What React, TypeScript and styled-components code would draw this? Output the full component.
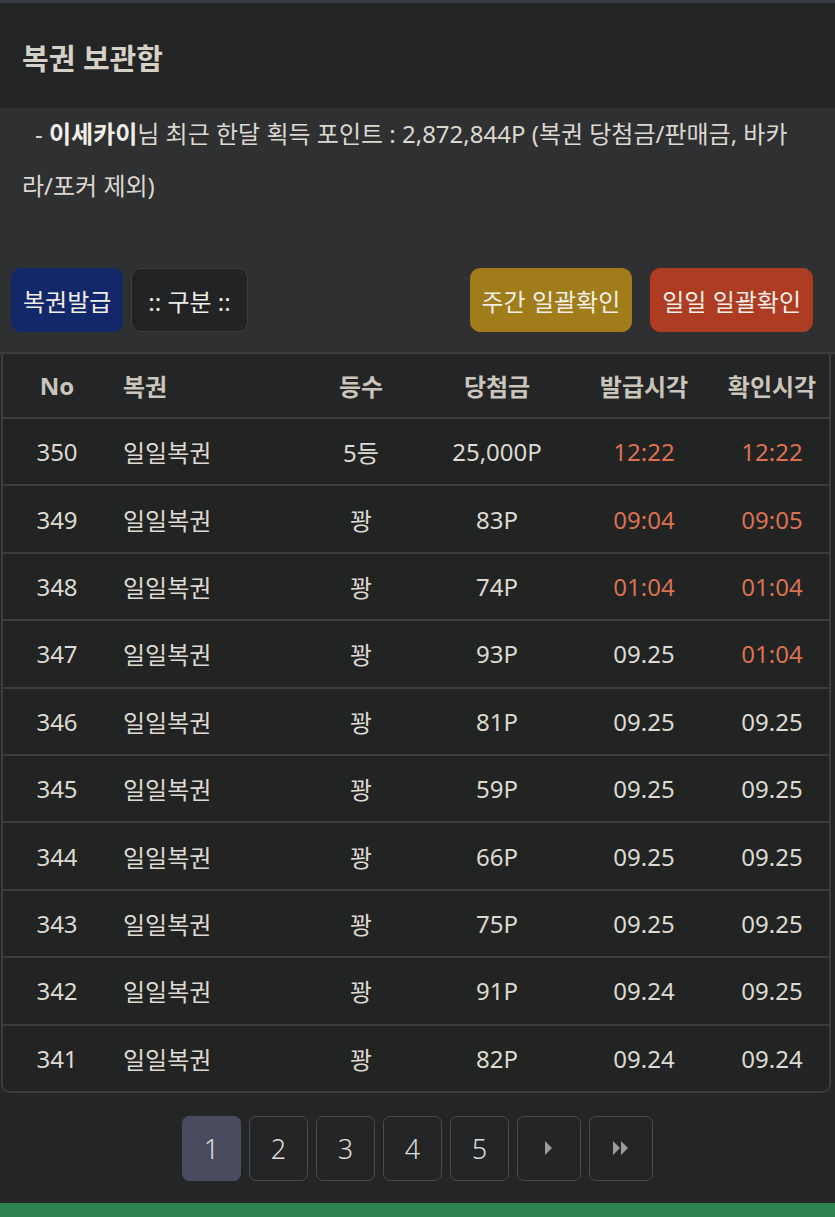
import React from "react";
import styled, { createGlobalStyle } from "styled-components";

const FONT = `"Noto Sans", "Noto Sans CJK KR", sans-serif`;

const GlobalStyle = createGlobalStyle`
  html, body {
    margin: 0;
    padding: 0;
    background: #242526;
  }
  body {
    font-family: ${FONT};
    color: #dedad2;
  }
  * { box-sizing: border-box; }
`;

const Page = styled.div`
  width: 835px;
  min-height: 1217px;
  display: flex;
  flex-direction: column;
  background: #242526;
  border-top: 3px solid #3a3c48;
`;

const TitleBar = styled.header`
  height: 105px;
  display: flex;
  align-items: center;
  padding: 0 22px;
  background: #232425;
`;

const Title = styled.h1`
  margin: 0;
  padding-top: 2px;
  font-size: 29px;
  font-weight: 700;
  color: #d6d1c6;
`;

const InfoSection = styled.section`
  background: #2f3031;
  padding: 0 22px 20px 11px;
  border-bottom: 2px solid #3c3d3e;
`;

const InfoText = styled.p`
  margin: 0;
  padding-left: 11px;
  font-size: 24px;
  line-height: 52px;
  color: #dcd8d0;
  text-indent: 13px;
  word-break: break-all;
`;

const Strong = styled.b`
  font-weight: 700;
  color: #f2efe9;
`;

const ButtonRow = styled.div`
  display: flex;
  align-items: center;
  margin-top: 56px;
  gap: 8px;
`;

const Spacer = styled.div`
  flex: 1;
`;

const ActionButton = styled.button<{ $bg: string; $border?: string; $ml?: number; $pad?: number }>`
  height: 64px;
  padding: 0 ${(p) => p.$pad ?? 11}px;
  border-radius: 10px;
  border: 1.5px solid ${(p) => p.$border ?? p.$bg};
  background: ${(p) => p.$bg};
  color: #f1eee8;
  font-family: ${FONT};
  font-size: 24px;
  font-weight: 400;
  margin-left: ${(p) => p.$ml ?? 0}px;
  white-space: nowrap;
`;

const Table = styled.div`
  margin: 0 4px 0 1px;
  background: #222323;
  border: 2px solid #3c3d3e;
  border-top: none;
  border-radius: 0 0 9px 9px;
  overflow: hidden;
`;

const Row = styled.div<{ $head?: boolean }>`
  display: grid;
  grid-template-columns: 108px 190px 120px 152px 142px 1fr;
  align-items: center;
  height: ${(p) => (p.$head ? "63px" : "67.4px")};
  border-top: ${(p) => (p.$head ? "none" : "2px solid #3c3d3e")};
  background: ${(p) => (p.$head ? "#242526" : "#222323")};
  font-size: 24px;
  font-weight: ${(p) => (p.$head ? 700 : 400)};
  color: ${(p) => (p.$head ? "#cbc6bb" : "#dedad2")};
`;

const Cell = styled.div<{ $left?: boolean; $hot?: boolean }>`
  text-align: ${(p) => (p.$left ? "left" : "center")};
  padding-left: ${(p) => (p.$left ? "12px" : "0")};
  color: ${(p) => (p.$hot ? "#da7150" : "inherit")};
  white-space: nowrap;
`;

const Pager = styled.nav`
  display: flex;
  justify-content: center;
  gap: 8px;
  margin-top: 23px;
`;

const PageBtn = styled.button<{ $active?: boolean; $wide?: boolean }>`
  width: ${(p) => (p.$wide ? "64px" : "59px")};
  height: 65px;
  border-radius: 7px;
  border: 1.5px solid ${(p) => (p.$active ? "#4a4b5e" : "#4a4b4c")};
  background: ${(p) => (p.$active ? "#4a4b5e" : "#242526")};
  color: #dcdcdc;
  font-family: ${FONT};
  font-size: 27px;
  font-weight: 300;
  display: flex;
  align-items: center;
  justify-content: center;
  padding: 0;
`;

const Footer = styled.div`
  margin-top: auto;
  height: 15px;
  background: #2e8450;
`;

const Body = styled.div`
  flex: 1;
  display: flex;
  flex-direction: column;
  padding-bottom: 22px;
`;

type R = { no: number; rank: string; prize: string; issue: string; check: string; hi: boolean; hc: boolean };

const rows: R[] = [
  { no: 350, rank: "5등", prize: "25,000P", issue: "12:22", check: "12:22", hi: true, hc: true },
  { no: 349, rank: "꽝", prize: "83P", issue: "09:04", check: "09:05", hi: true, hc: true },
  { no: 348, rank: "꽝", prize: "74P", issue: "01:04", check: "01:04", hi: true, hc: true },
  { no: 347, rank: "꽝", prize: "93P", issue: "09.25", check: "01:04", hi: false, hc: true },
  { no: 346, rank: "꽝", prize: "81P", issue: "09.25", check: "09.25", hi: false, hc: false },
  { no: 345, rank: "꽝", prize: "59P", issue: "09.25", check: "09.25", hi: false, hc: false },
  { no: 344, rank: "꽝", prize: "66P", issue: "09.25", check: "09.25", hi: false, hc: false },
  { no: 343, rank: "꽝", prize: "75P", issue: "09.25", check: "09.25", hi: false, hc: false },
  { no: 342, rank: "꽝", prize: "91P", issue: "09.24", check: "09.25", hi: false, hc: false },
  { no: 341, rank: "꽝", prize: "82P", issue: "09.24", check: "09.24", hi: false, hc: false },
];

const Next = () => (
  <svg width="10" height="14" viewBox="0 0 10 14">
    <path d="M1 0 L8 7 L1 14 Z" fill="#9c9c9c" />
  </svg>
);

const Last = () => (
  <svg width="18" height="14" viewBox="0 0 18 14">
    <path d="M1 0 L8 7 L1 14 Z M9 0 L16 7 L9 14 Z" fill="#9c9c9c" />
  </svg>
);

export default function App() {
  return (
    <>
      <GlobalStyle />
      <Page>
        <TitleBar>
          <Title>복권 보관함</Title>
        </TitleBar>
        <InfoSection>
          <InfoText>
            - <Strong>이세카이</Strong>님 최근 한달 획득 포인트 : 2,872,844P (복권 당첨금/판매금, 바카라/포커 제외)
          </InfoText>
          <ButtonRow>
            <ActionButton $bg="#13286a">복권발급</ActionButton>
            <ActionButton $bg="#222324" $border="#3c3d3e" $pad={16}>:: 구분 ::</ActionButton>
            <Spacer />
            <ActionButton $bg="#a07c1b">주간 일괄확인</ActionButton>
            <ActionButton $bg="#ad3c22" $ml={10}>일일 일괄확인</ActionButton>
          </ButtonRow>
        </InfoSection>
        <Body>
          <Table>
            <Row $head>
              <Cell>No</Cell>
              <Cell $left>복권</Cell>
              <Cell>등수</Cell>
              <Cell>당첨금</Cell>
              <Cell>발급시각</Cell>
              <Cell>확인시각</Cell>
            </Row>
            {rows.map((r) => (
              <Row key={r.no}>
                <Cell>{r.no}</Cell>
                <Cell $left>일일복권</Cell>
                <Cell>{r.rank}</Cell>
                <Cell>{r.prize}</Cell>
                <Cell $hot={r.hi}>{r.issue}</Cell>
                <Cell $hot={r.hc}>{r.check}</Cell>
              </Row>
            ))}
          </Table>
          <Pager>
            <PageBtn $active>1</PageBtn>
            <PageBtn>2</PageBtn>
            <PageBtn>3</PageBtn>
            <PageBtn>4</PageBtn>
            <PageBtn>5</PageBtn>
            <PageBtn $wide aria-label="next"><Next /></PageBtn>
            <PageBtn $wide aria-label="last"><Last /></PageBtn>
          </Pager>
        </Body>
        <Footer />
      </Page>
    </>
  );
}
